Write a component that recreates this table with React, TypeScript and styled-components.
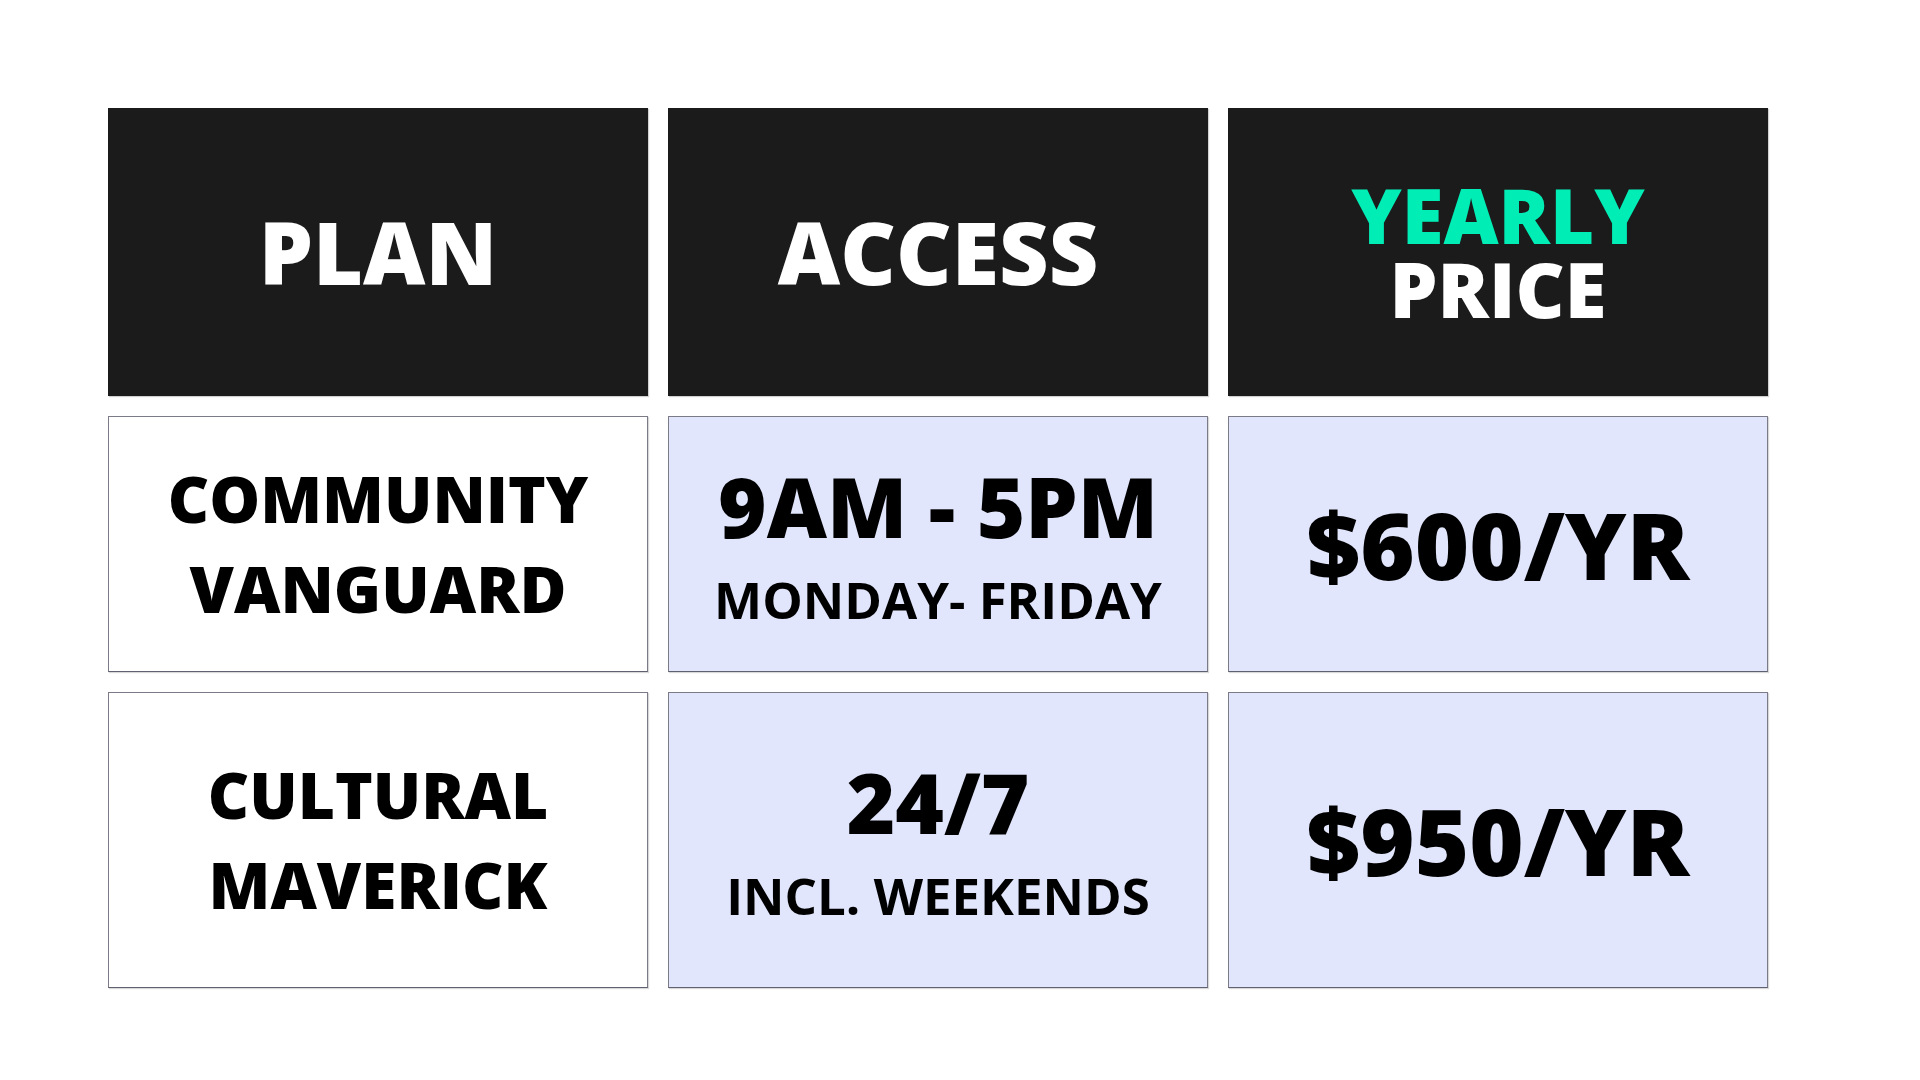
import React from 'react';
import styled, { createGlobalStyle } from 'styled-components';

type Plan = {
  name: string[];
  hours: string;
  days: string;
  price: string;
};

const plans: Plan[] = [
  { name: ['COMMUNITY', 'VANGUARD'], hours: '9AM - 5PM', days: 'MONDAY- FRIDAY', price: '$600/YR' },
  { name: ['CULTURAL', 'MAVERICK'], hours: '24/7', days: 'INCL. WEEKENDS', price: '$950/YR' },
];

const GlobalStyle = createGlobalStyle`
  html, body {
    margin: 0;
    padding: 0;
    background: #ffffff;
  }
  body {
    font-family: 'Open Sans', 'Noto Sans', sans-serif;
    color: #000;
  }
`;

const Page = styled.div`
  width: 1920px;
  height: 1080px;
  box-sizing: border-box;
  padding: 108px 0 0 108px;
`;

const Table = styled.div`
  display: grid;
  grid-template-columns: repeat(3, 540px);
  grid-template-rows: 288px 256px 296px;
  gap: 20px;
`;

const HeadCell = styled.div`
  background: #1b1b1b;
  color: #ffffff;
  display: flex;
  flex-direction: column;
  align-items: center;
  justify-content: center;
  text-align: center;
  box-shadow: 1px 1px 1px rgba(0, 0, 0, 0.18);
`;

const HeadText = styled.div<{ $stacked?: boolean }>`
  font-weight: 800;
  font-size: ${(p) => (p.$stacked ? 76 : 86)}px;
  line-height: ${(p) => (p.$stacked ? '74px' : '1.1')};
  color: #ffffff;
`;

const Accent = styled.span`
  color: #00eeb6;
`;

const Cell = styled.div<{ $tint?: boolean }>`
  background: ${(p) => (p.$tint ? '#e1e6fc' : '#ffffff')};
  border: 1px solid #7a7b86;
  border-bottom-color: #5f6070;
  box-shadow: 1px 1px 1px rgba(0, 0, 0, 0.15);
  box-sizing: border-box;
  display: flex;
  flex-direction: column;
  align-items: center;
  justify-content: center;
  text-align: center;
`;

const PlanName = styled.span`
  font-weight: 800;
  font-size: 64px;
  line-height: 90px;
`;

const Hours = styled.span`
  font-weight: 800;
  font-size: 83px;
  line-height: 86px;
  margin-top: 5px;
`;

const Days = styled.span`
  font-weight: 700;
  font-size: 51px;
  line-height: 61px;
  margin-top: 20px;
`;

const Price = styled.span`
  font-weight: 800;
  font-size: 93px;
  line-height: 1.1;
`;

export default function App() {
  return (
    <>
      <GlobalStyle />
      <Page>
        <Table>
          <HeadCell>
            <HeadText>PLAN</HeadText>
          </HeadCell>
          <HeadCell>
            <HeadText>ACCESS</HeadText>
          </HeadCell>
          <HeadCell>
            <HeadText $stacked>
              <Accent>YEARLY</Accent>
              <br />
              PRICE
            </HeadText>
          </HeadCell>

          {plans.map((plan) => (
            <React.Fragment key={plan.price}>
              <Cell>
                {plan.name.map((line) => (
                  <PlanName key={line}>{line}</PlanName>
                ))}
              </Cell>
              <Cell $tint>
                <Hours>{plan.hours}</Hours>
                <Days>{plan.days}</Days>
              </Cell>
              <Cell $tint>
                <Price>{plan.price}</Price>
              </Cell>
            </React.Fragment>
          ))}
        </Table>
      </Page>
    </>
  );
}
